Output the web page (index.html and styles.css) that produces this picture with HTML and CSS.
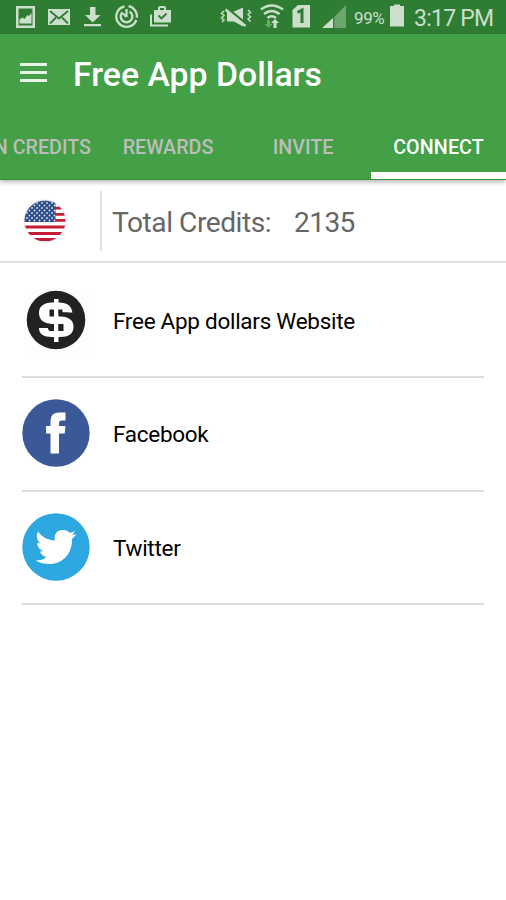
FILE: index.html
```html
<!DOCTYPE html>
<html lang="en">
<head>
<meta charset="utf-8">
<title>Free App Dollars</title>
<link rel="stylesheet" href="styles.css">
</head>
<body>
<div class="status">
  <div class="status-left">
    <svg width="20" height="34" viewBox="16 0 20 34"><path fill-rule="evenodd" d="M16 6h19v22H16zM18.500 8.500v17h14v-17z"/><path d="M19.500 23.500v-4l3-2 2 1.500 3-4 1.500 1 2.500-3v10.500z"/></svg>
    <svg width="22" height="34" viewBox="48 0 22 34"><path d="M48 9h22v16H48z"/><path class="cut" d="M50 11l9 7.500 9-7.500M50 23.500l6-6M68 23.500l-6-6"/></svg>
    <svg width="17" height="34" viewBox="84 0 17 34"><path d="M90 7h5.500v8h5L92.700 22.500 85 15h5zM84 24h17v2.200H84z"/></svg>
    <svg width="24" height="34" viewBox="115 0 24 34"><g class="line"><path d="M124.500 6.500a10.300 10.300 0 1 0 11.800 13.500M128.500 6.200a10.300 10.300 0 0 1 8.300 11.500"/><path d="M122.500 12.300a5.800 5.800 0 1 0 7-.8M126.500 9v8M123 13.500l3.500 3.500"/></g></svg>
    <svg width="22" height="34" viewBox="150 0 22 34"><path fill-rule="evenodd" d="M154 10h4V8q0-2 2-2h4q2 0 2 2v2h5v12.500h-17zM160 10h4V8h-4z"/><path d="M150 14.500h2v10h16v2h-18z"/><path class="cut" d="M158.500 15.500l3 3 5-5"/></svg>
  </div>
  <div class="status-right">
    <svg width="32" height="34" viewBox="220 0 32 34"><path d="M227 11.500h7l9-4v19l-9-5h-7z"/><path class="cut slash-edge" d="M227 8.500l20 16.500"/><path class="line" d="M225.500 9.500l20 16.500"/><path class="buzz" d="M224 11l-2.500 2.500 2.500 2-2.500 2.500 2.500 2-2 2M248 10l2.500 2.500-2.500 2 2.500 2.500-2.500 2 2.500 2.500"/></svg>
    <svg width="24" height="34" viewBox="260 0 24 34"><g class="line wave"><path d="M261 9.500q10.500-8 22 0M264 14q7.500-6 15.500 0M267.500 18q4-3.500 8.500 0"/></g><path d="M275 19l4 4h-2.500v5h-3v-5H271z"/><path class="dim" d="M267 20h3v4h2.500l-4 4-4-4h2.500z"/></svg>
    <svg width="18" height="34" viewBox="292 0 18 34"><path d="M298 5h12v22.500h-17.500V10z"/><path class="digit" d="M297.500 12.500l4.500-2.500v13"/></svg>
    <svg width="24" height="34" viewBox="322 0 24 34"><path class="dim" d="M346 5v23h-23z"/><path d="M333 18v10h-11z"/><path class="gap" d="M333.700 15v13"/></svg>
    <span class="percent">99%</span>
    <svg width="15" height="34" viewBox="390 0 15 34"><path d="M394 4.500h6V6h4v20.500h-14V6h4z"/></svg>
    <span class="clock">3:17 PM</span>
  </div>
</div>
<header class="header">
  <div class="toolbar">
    <div class="menu"><i></i><i></i><i></i></div>
    <h1>Free App Dollars</h1>
  </div>
  <nav class="tabs">
    <div class="tab earn">EARN CREDITS</div>
    <div class="tab">REWARDS</div>
    <div class="tab">INVITE</div>
    <div class="tab active">CONNECT</div>
  </nav>
</header>
<main>
  <section class="credits">
    <svg class="flag" width="44" height="44" viewBox="0 0 44 44">
      <defs>
        <clipPath id="round"><circle cx="22" cy="22" r="20.500"/></clipPath>
        <pattern id="stars" width="5" height="5" patternUnits="userSpaceOnUse"><circle cx="1.500" cy="1.500" r=".9"/><circle cx="4" cy="4" r=".9"/></pattern>
      </defs>
      <circle class="rim" cx="22" cy="22" r="21"/>
      <g clip-path="url(#round)">
        <path class="stripes" d="M0 9.200h44M0 15.400h44M0 21.400h44M0 28h44M0 34.500h44M0 40.500h44"/>
        <path class="white" d="M0 23h44v3H0z"/>
        <path class="canton" d="M0 0h32.500v23H0z"/><path class="stars" d="M0 0h32.500v23H0z"/>
      </g>
    </svg>
    <div class="rule"></div>
    <span class="label">Total Credits:</span>
    <span class="amount">2135</span>
  </section>
  <ul class="links">
    <li>
      <svg width="68" height="68" viewBox="0 0 68 68"><path class="tile" d="M2 2h65v65H2z"/><circle class="ink" cx="34" cy="34" r="29.300"/><path class="dollar" d="M50.500 26.500H40.500q-1-3-6-3t-5 3.500 5 3.500h4Q51.500 31 51.500 41T38 51H30Q17 51 17 42h9q1 3 6 3h3q6 0 6-3.500T35 38H30Q17 37 17 27T30 16.500h8q11 0 12.500 10z"/><path class="white" d="M32 13h4.500v43H32z"/><path class="ink" d="M27.500 23.500h4.500v7h-4.500zM36.500 23.500h4v3h6v2h-10zM36.500 38h5v7h-5zM32 45h-5l-1-3h-7v-2h13z"/></svg>
      <span>Free App dollars Website</span>
    </li>
    <li>
      <svg width="68" height="68" viewBox="0 0 68 68"><circle class="facebook" cx="34" cy="34" r="33.700"/><path class="white" d="M43.500 13.500v8h-4q-2.500 0-2.500 2.800V27h6.500l-.8 7.500H37v20h-8.500v-20h-4.500V27h4.500v-5q0-8.500 8.500-8.500z"/></svg>
      <span>Facebook</span>
    </li>
    <li>
      <svg width="68" height="68" viewBox="0 0 68 68"><circle class="twitter" cx="34" cy="34" r="33.700"/><path class="white" d="M16 18.500C20 24 26 27 33 27.500C31.500 20 36 17 41 17C44 17 46 18 48 20L53 18L50.500 22L54.500 21.300L50 26C50.500 41 40 51 28 51C22 51 18 50 13.500 47.500C18 47.500 22 46.500 24.500 44C21 43.500 18.500 41 18 38.500L21.500 38.300C17 36.500 15 33 15.300 29.800L18.500 30.500C14.500 27 14 22.500 16 18.500z"/></svg>
      <span>Twitter</span>
    </li>
  </ul>
</main>
</body>
</html>
```

FILE: styles.css
```css
* { box-sizing: border-box; }
body {
  margin: 0;
  width: 506px;
  height: 900px;
  overflow: hidden;
  background: #fff;
  font-family: Roboto, "Liberation Sans", sans-serif;
}
svg { display: block; flex: none; }

.status {
  display: flex;
  justify-content: space-between;
  height: 34px;
  padding: 0 12px 0 16px;
  background: #2f7d33;
  color: #cbdfcc;
  fill: #cbdfcc;
}
.status-left { display: flex; gap: 12px; }
.status-left svg:nth-child(3) { margin-left: 2px; }
.status-left svg:nth-child(4) { margin-left: 2px; }
.status-left svg:nth-child(5) { margin-left: -1px; }
.status-right { display: flex; width: 274px; }
.status-right svg:nth-child(2) { margin-left: 8px; }
.status-right svg:nth-child(3) { margin-left: 8px; }
.status-right svg:nth-child(4) { margin-left: 12px; }
.cut { fill: none; stroke: #2f7d33; stroke-width: 1.8; }
.slash-edge { stroke-width: 3; }
.line { fill: none; stroke: #cbdfcc; stroke-width: 2.3; }
.wave { stroke-width: 2.6; }
.buzz { fill: none; stroke: #cbdfcc; stroke-width: 1.5; }
.dim { fill: #6ca66f; }
.digit { fill: none; stroke: #2f7d33; stroke-width: 3; }
.gap { fill: none; stroke: #2f7d33; stroke-width: 1.2; }
.percent { flex: none; width: 36px; margin-left: 8px; font-size: 17px; line-height: 36px; letter-spacing: -.4px; }
.clock { flex: none; margin-left: 9px; font-size: 23px; line-height: 37px; letter-spacing: -.75px; white-space: nowrap; }

.header {
  position: relative;
  height: 146px;
  margin-bottom: 1px;
  background: #43a047;
  box-shadow: 0 2px 5px rgba(0, 0, 0, .3);
}
.toolbar { display: flex; align-items: center; height: 80px; padding-left: 20px; }
.menu { display: flex; flex-direction: column; gap: 5px; width: 27px; margin-top: -3px; }
.menu i { height: 3px; background: #e9f4e9; }
h1 { margin: 1px 0 0 26px; color: #fff; font-size: 33.8px; line-height: 40px; font-weight: 500; white-space: nowrap; }
.tabs { display: grid; grid-template-columns: 101px 134px 136px 135px; height: 66px; overflow: hidden; border-bottom: 1px solid #2d9633; }
.tab { color: #bdbdbd; font-size: 19.7px; font-weight: 500; line-height: 68px; text-align: center; white-space: nowrap; }
.earn { display: flex; justify-content: flex-end; padding-right: 10px; }
.active { height: 66px; border-bottom: 8px solid #fff; color: #fff; letter-spacing: .1px; }

.credits { display: flex; align-items: center; height: 82px; border-bottom: 2px solid #e0e0e0; padding: 0 0 0 23px; color: #666; font-size: 28.1px; }
.rim { fill: #fff; stroke: #ddd; stroke-width: .7; }
.stripes { stroke: #c41d36; stroke-width: 2.8; }
.white { fill: #fff; }
.canton { fill: #2b4c86; }
#stars { fill: #dfe7f3; }
.stars { fill: url(#stars); }
.rule { width: 2px; height: 60px; margin: 0 10px 0 33px; background: #e0e0e0; }
.label { width: 182px; letter-spacing: -.44px; white-space: nowrap; }
.amount { letter-spacing: -.6px; }
.credits span { line-height: 36px; padding-top: 3px; }

.links { margin: 0; padding: 0 22px; list-style: none; }
.links li { display: flex; align-items: center; gap: 22px; height: 113.5px; padding-bottom: 1px; border-bottom: 2px solid #dedede; color: #000; font-size: 22.5px; letter-spacing: -.28px; }
.links li:first-child { height: 115px; padding-bottom: 0; }
.links span { padding: 2px 0 0 1px; }
.tile { fill: #fdfdfd; }
.ink { fill: #222; }
.dollar { fill: #fff; }
.facebook { fill: #3b5998; }
.twitter { fill: #2ca7e0; }
```
